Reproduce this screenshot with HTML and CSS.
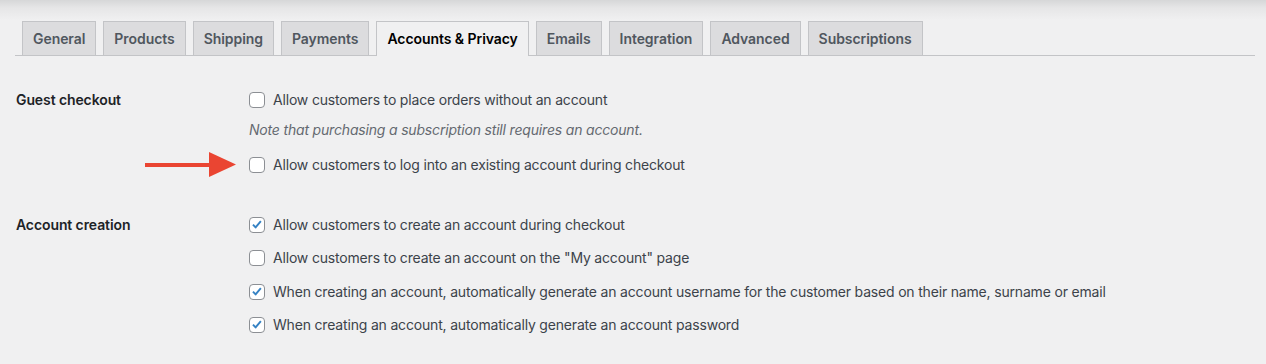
FILE: index.html
```html
<!DOCTYPE html>
<html lang="en">
<head>
    <meta charset="UTF-8">
    <meta name="viewport" content="width=device-width, initial-scale=1.0">
    <title>Accounts &amp; Privacy</title>
    <link rel="stylesheet" href="styles.css">
</head>
<body>
    <div class="top-shadow"></div>
    <nav class="tabs">
        <a class="tab">General</a>
        <a class="tab">Products</a>
        <a class="tab">Shipping</a>
        <a class="tab">Payments</a>
        <a class="tab active">Accounts &amp; Privacy</a>
        <a class="tab">Emails</a>
        <a class="tab">Integration</a>
        <a class="tab">Advanced</a>
        <a class="tab">Subscriptions</a>
    </nav>

    <div class="setting first">
        <div class="label">Guest checkout</div>
        <div class="options">
            <label class="option"><span class="box"></span>Allow customers to place orders without an account</label>
            <p class="note">Note that purchasing a subscription still requires an account.</p>
            <label class="option pointed">
                <span class="arrow"></span>
                <span class="box"></span>Allow customers to log into an existing account during checkout
            </label>
        </div>
    </div>

    <div class="setting second">
        <div class="label">Account creation</div>
        <div class="options spaced">
            <label class="option"><span class="box checked"></span>Allow customers to create an account during checkout</label>
            <label class="option"><span class="box"></span>Allow customers to create an account on the "My account" page</label>
            <label class="option"><span class="box checked"></span>When creating an account, automatically generate an account username for the customer based on their name, surname or email</label>
            <label class="option"><span class="box checked"></span>When creating an account, automatically generate an account password</label>
        </div>
    </div>
</body>
</html>
```

FILE: styles.css
```css
body{
    margin: 0;
    background-color: #f0f0f1;
    font-family: Inter, "Liberation Sans", sans-serif;
    font-size: 14px;
    color: #3c434a;
}
.top-shadow{
    height: 20px;
    background: linear-gradient(to bottom, #d6d7d8 0%, #e6e6e7 40%, #f0f0f1 100%);
}
.tabs{
    display: flex;
    margin: 0 11px 0 15px;
    padding-left: 7px;
    border-bottom: 1px solid #c3c4c7;
    height: 35px;
}
.tab{
    display: block;
    height: 34px;
    box-sizing: border-box;
    padding: 0 10px;
    margin-right: 7px;
    line-height: 33px;
    font-size: 14px;
    font-weight: 600;
    letter-spacing: -0.06px;
    color: #50575e;
    background-color: #dcdcde;
    border: 1px solid #c3c4c7;
    border-bottom: none;
    margin-top: 1px;
}
.tab.active{
    color: #000;
    background-color: #f0f0f1;
    height: 35px;
    margin-bottom: -1px;
}
.setting{
    display: grid;
    grid-template-columns: 233px 1fr;
    padding-left: 16px;
    letter-spacing: -0.18px;
}
.setting.first{
    margin-top: 34px;
}
.setting.second{
    margin-top: 40px;
}
.label{
    font-weight: 600;
    color: #1d2327;
    line-height: 20px;
    letter-spacing: -0.1px;
}
.options{
    display: flex;
    flex-direction: column;
}
.options.spaced{
    gap: 13.4px;
}
.option{
    display: flex;
    align-items: center;
    height: 20px;
    line-height: 20px;
}
.pointed{
    position: relative;
    margin-top: 15px;
}
.note{
    margin: 10px 0 0;
    line-height: 20px;
    font-style: italic;
    color: #646970;
}
.box{
    width: 16px;
    height: 16px;
    box-sizing: border-box;
    border: 1px solid #8c8f94;
    border-radius: 4px;
    background-color: #fff;
    margin-right: 8px;
    flex-shrink: 0;
}
.box.checked{
    background: #fff url("data:image/svg+xml;utf8,<svg xmlns='http://www.w3.org/2000/svg' viewBox='0 0 16 16'><path d='M3.4 7.6 L6.4 10.8 L12.4 3.6' fill='none' stroke='%233582c4' stroke-width='2.2' stroke-linejoin='round'/></svg>") center / 14px 14px no-repeat;
}
.arrow{
    position: absolute;
    left: -104px;
    top: -3px;
    width: 91px;
    height: 25px;
    background: url("data:image/svg+xml;utf8,<svg xmlns='http://www.w3.org/2000/svg' viewBox='0 0 91 25'><rect x='0' y='11' width='66' height='4' fill='%23ea4532'/><polygon points='64,0 91,12.5 64,25' fill='%23ea4532'/></svg>") no-repeat;
}
```
